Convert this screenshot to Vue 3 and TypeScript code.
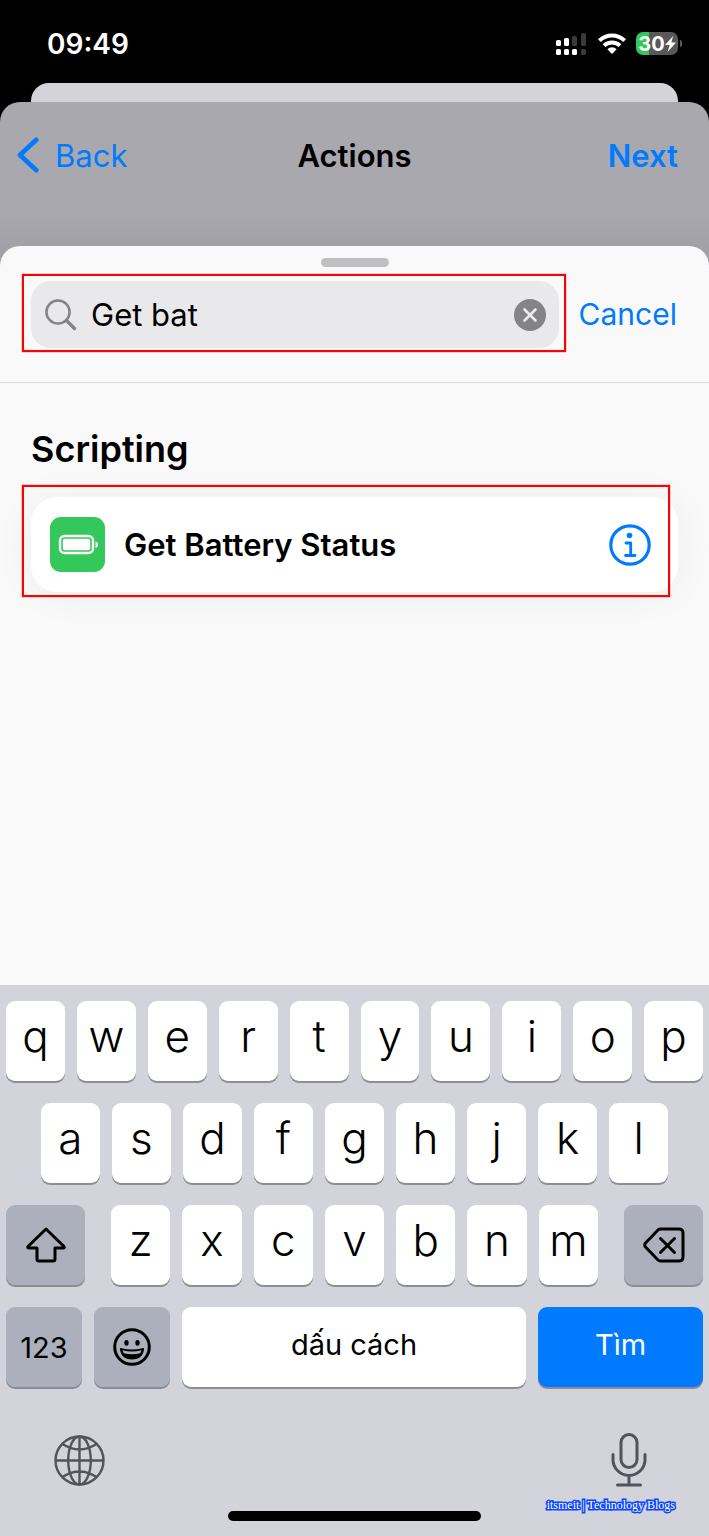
<script setup lang="ts">
import { ref } from 'vue'

const query = ref('Get bat')
const topRow: string[] = [...'qwertyuiop']
const homeRow: string[] = [...'asdfghjkl']
const bottomRow: string[] = [...'zxcvbnm']

function type(letter: string) {
  query.value += letter
}

function erase() {
  query.value = query.value.slice(0, -1)
}
</script>

<template>
  <div class="phone">
    <header class="status">
      <time class="clock">09:49</time>
      <div class="indicators">
        <svg class="signal" viewBox="0 0 30 22" aria-label="Signal">
          <g fill="#fff">
            <rect x="0" y="7" width="5" height="6" rx="1.5" />
            <rect x="8" y="5" width="5" height="8" rx="1.5" />
            <rect x="0" y="16" width="5" height="6" rx="1.5" />
            <rect x="8" y="16" width="5" height="6" rx="1.5" />
            <rect x="16" y="16" width="5" height="6" rx="1.5" />
          </g>
          <g fill="#3a3a3a">
            <rect x="16" y="3" width="5" height="10" rx="1.5" />
            <rect x="25" y="0" width="5" height="13" rx="1.5" />
            <rect x="25" y="16" width="5" height="6" rx="1.5" />
          </g>
        </svg>
        <svg class="wifi" viewBox="0 0 28 21" aria-label="Wi-Fi">
          <g fill="none" stroke="#fff" stroke-width="4">
            <path d="M1.4 7.6a18 18 0 0 1 25.2 0" />
            <path d="M6 12.6a11.6 11.6 0 0 1 16 0" />
          </g>
          <path d="M9.4 16.2a6.6 6.6 0 0 1 9.2 0L14 21z" fill="#fff" />
        </svg>
        <div class="battery">
          <span class="battery-body">
            <span>30</span>
            <svg class="bolt" viewBox="0 0 11 16" aria-hidden="true">
              <path d="M8.2 0 0 9h4.6L2.6 16 11 6.6H6.3z" fill="#fff" />
            </svg>
          </span>
          <span class="battery-cap"></span>
        </div>
      </div>
    </header>

    <div class="back-sheet"></div>

    <div class="sheet">
      <nav class="nav">
        <button type="button" class="link back">
          <svg class="chevron" viewBox="0 0 22 36" aria-hidden="true">
            <path d="M19.3 2.7 3 18l16.300 15.300" fill="none" stroke="currentColor" stroke-width="4.600" stroke-linecap="round" stroke-linejoin="round" />
          </svg>
          <span>Back</span>
        </button>
        <h1 class="title">Actions</h1>
        <button type="button" class="link next">Next</button>
      </nav>

      <main class="panel">
        <div class="grabber"></div>
        <form class="search" role="search" @submit.prevent>
          <div class="field">
            <label class="field-label" for="query" aria-label="Search actions">
              <svg class="magnifier" viewBox="0 0 32 32" aria-hidden="true">
                <g fill="none" stroke="#838388" stroke-linecap="round">
                  <circle cx="13" cy="13" r="11.600" stroke-width="2.500" />
                  <path d="m21.500 21.500 8 8" stroke-width="3.400" />
                </g>
              </svg>
            </label>
            <input id="query" v-model="query" type="text" autocomplete="off" />
            <button type="button" class="clear" aria-label="Clear" @click="query = ''">
              <svg viewBox="0 0 32 32" aria-hidden="true">
                <circle cx="16" cy="16" r="16" fill="#838388" />
                <path d="m10.500 10.500 11 11m0-11-11 11" stroke="#ececee" stroke-width="2.600" stroke-linecap="round" />
              </svg>
            </button>
            <span class="highlight field-highlight"></span>
          </div>
          <button type="button" class="link cancel">Cancel</button>
        </form>

        <section class="results">
          <h2>Scripting</h2>
          <div class="card">
            <svg class="app-icon" viewBox="0 0 55 55" aria-hidden="true">
              <rect width="55" height="55" rx="11" fill="#34c759" />
              <rect x="10" y="19" width="33" height="17" rx="4.500" fill="none" stroke="#fff" stroke-width="2.400" />
              <rect x="12.800" y="21.800" width="27.400" height="11.400" rx="2" fill="#fff" />
              <path d="M45.500 24.200a4 3.600 0 0 1 0 6.800z" fill="#fff" />
            </svg>
            <span class="card-title">Get Battery Status</span>
            <button type="button" class="info" aria-label="Info">
              <svg viewBox="0 0 42 42" aria-hidden="true">
                <circle cx="21" cy="21" r="19.200" fill="none" stroke="#007aff" stroke-width="3.200" />
                <circle cx="20.500" cy="11.500" r="2.800" fill="#007aff" />
                <path d="M17 19h4.700v12.200M16.500 31.500h9.500" fill="none" stroke="#007aff" stroke-width="2.800" stroke-linecap="round" stroke-linejoin="round" />
              </svg>
            </button>
            <span class="highlight card-highlight"></span>
          </div>
        </section>
      </main>
    </div>

    <div class="keyboard">
      <div class="row">
        <button v-for="k in topRow" :key="k" type="button" class="key" @click="type(k)">{{ k }}</button>
      </div>
      <div class="row home">
        <button v-for="k in homeRow" :key="k" type="button" class="key" @click="type(k)">{{ k }}</button>
      </div>
      <div class="row lower">
        <button type="button" class="key dark wide" aria-label="Shift">
          <svg class="shift-icon" viewBox="0 0 40 36" aria-hidden="true">
            <path d="M20 2 2 19.500q-.8 1.500 1 1.500h8V32q0 2 2 2h14q2 0 2-2V21h8q1.800 0 1-1.500z" fill="none" stroke="#000" stroke-width="3" stroke-linejoin="round" />
          </svg>
        </button>
        <div class="row letters">
          <button v-for="k in bottomRow" :key="k" type="button" class="key" @click="type(k)">{{ k }}</button>
        </div>
        <button type="button" class="key dark wide" aria-label="Delete" @click="erase">
          <svg class="delete-icon" viewBox="0 0 42 36" aria-hidden="true">
            <g fill="none" stroke="#000" stroke-width="3" stroke-linejoin="round" stroke-linecap="round">
              <path d="M17.500 2H36q4 0 4 4v24q0 4-4 4H17.500q-1.500 0-2.500-1L2.500 20q-1.500-2 0-4L15 3q1-1 2.500-1z" />
              <path d="m17.500 11.500 14 14m0-14-14 14" />
            </g>
          </svg>
        </button>
      </div>
      <div class="row">
        <button type="button" class="key dark fn small">123</button>
        <button type="button" class="key dark fn" aria-label="Emoji">
          <svg class="emoji-icon" viewBox="0 0 38 38" aria-hidden="true">
            <circle cx="19" cy="19" r="17.300" fill="none" stroke="#000" stroke-width="3" />
            <ellipse cx="13.500" cy="14.800" rx="2.200" ry="2.900" />
            <ellipse cx="24.500" cy="14.800" rx="2.200" ry="2.900" />
            <path d="M7.500 20.500q11.500 3.400 23 0-1 10.500-11.500 10.500T7.500 20.500z" stroke="#000" stroke-width="1.200" stroke-linejoin="round" />
            <path d="M9.500 22.300q9.500 2.500 19 0l-1.200 3q-8.300 2-16.600 0z" fill="#abb0bc" />
          </svg>
        </button>
        <button type="button" class="key space small" @click="type(' ')">dấu cách</button>
        <button type="button" class="key find small">Tìm</button>
      </div>

      <div class="dock">
        <button type="button" class="dock-button" aria-label="Next keyboard">
          <svg class="globe" viewBox="0 0 51 51" aria-hidden="true">
            <g fill="none" stroke="#50555c" stroke-width="2.400">
              <circle cx="25.500" cy="25.500" r="24" />
              <ellipse cx="25.500" cy="25.500" rx="11.300" ry="24" />
              <path d="M25.500 1.500v48M1.500 25.500h48M8.500 9q17 11 34 0M8.500 42q17-11 34 0" />
            </g>
          </svg>
        </button>
        <button type="button" class="dock-button" aria-label="Dictation">
          <svg class="mic" viewBox="0 0 36 54" aria-hidden="true">
            <g fill="none" stroke="#50555c" stroke-width="3" stroke-linecap="round">
              <rect x="10" y="1.500" width="16" height="33" rx="8" />
              <path d="M2 21.500v5a16 16 0 0 0 32 0v-5M18 42.500v9M6.500 52h23" />
            </g>
          </svg>
        </button>
      </div>
      <div class="home-bar"></div>
      <span class="watermark">itsmeit | Technology Blogs</span>
    </div>
  </div>
</template>

<style>
body {
  margin: 0;
  background: #000;
}
</style>

<style scoped>
.phone {
  display: flex;
  flex-direction: column;
  min-height: 100vh;
  background: #000;
  font-family: Inter, "Liberation Sans", sans-serif;
  color: #000;
}

button {
  margin: 0;
  padding: 0;
  border: 0;
  background: none;
  font: inherit;
  color: inherit;
}

svg {
  display: block;
}

h1,
h2 {
  margin: 0;
}

.status {
  display: flex;
  align-items: center;
  justify-content: space-between;
  height: 83px;
  padding: 4px 27px 0 47px;
  box-sizing: border-box;
  color: #fff;
}

.clock {
  font-size: 28px;
  font-weight: 600;
}

.indicators {
  display: flex;
  align-items: center;
  gap: 12px;
}

.signal {
  width: 30px;
  height: 22px;
}

.wifi {
  width: 28px;
  height: 21px;
}

.battery {
  display: flex;
  align-items: center;
  gap: 2px;
  margin-left: -2px;
}

.battery-body {
  display: flex;
  align-items: center;
  justify-content: center;
  width: 42px;
  height: 23px;
  border-radius: 7px;
  background: linear-gradient(90deg, #34c759 30%, #58585a 30%);
  font-size: 20px;
  font-weight: 700;
}

.bolt {
  width: 11px;
  height: 16px;
}

.battery-cap {
  width: 2px;
  height: 7px;
  border-radius: 0 2px 2px 0;
  background: #58585a;
}

.back-sheet {
  height: 19px;
  margin: 0 31px;
  border-radius: 18px 18px 0 0;
  background: #d4d3d9;
}

.sheet {
  display: flex;
  flex: 1;
  flex-direction: column;
  border-radius: 20px 20px 0 0;
  background: linear-gradient(#a9a8ae 110px, #a1a0a6 150px);
}

.nav {
  display: grid;
  grid-template-columns: 1fr auto 1fr;
  align-items: center;
  height: 144px;
  padding: 0 17px 38px;
  box-sizing: border-box;
  font-size: 31px;
}

.link {
  color: #007aff;
  white-space: nowrap;
}

.back {
  display: flex;
  align-items: center;
  gap: 16px;
  justify-self: start;
}

.chevron {
  width: 22px;
  height: 36px;
}

.title {
  font-size: 31px;
  font-weight: 600;
}

.next {
  justify-self: end;
  margin-right: 14px;
  font-weight: 600;
}

.panel {
  flex: 1;
  border-radius: 20px 20px 0 0;
  background: #f9f9f9;
}

.grabber {
  width: 68px;
  height: 9px;
  margin: 0 auto;
  border-radius: 5px;
  background: #c0c0c2;
  transform: translateY(12px);
}

.search {
  display: flex;
  align-items: center;
  gap: 20px;
  padding: 26px 32px 34px 31px;
  border-bottom: 1px solid #d8d8da;
}

.field {
  position: relative;
  display: flex;
  flex: 1;
  align-items: center;
  gap: 14px;
  min-width: 0;
  height: 67px;
  padding: 0 13px 0 14px;
  box-sizing: border-box;
  border-radius: 20px;
  background: #e9e9eb;
}

.magnifier,
.clear svg {
  width: 32px;
  height: 32px;
}

.field input {
  flex: 1;
  min-width: 0;
  padding: 0;
  border: 0;
  outline: 0;
  background: none;
  font: inherit;
  font-size: 31px;
  color: #000;
}

.cancel {
  padding-bottom: 2px;
  font-size: 30px;
}

.highlight {
  position: absolute;
  border: 2px solid #f00;
  box-shadow: 0 0 1px #f00;
  pointer-events: none;
}

.field-highlight {
  inset: -7px -7px -4px -9px;
}

.card-highlight {
  inset: -12px 8px -5px -9px;
}

.results {
  padding: 42px 31px 0;
}

.results h2 {
  font-size: 36px;
  font-weight: 600;
  line-height: 48px;
}

.card {
  position: relative;
  display: flex;
  align-items: center;
  gap: 19px;
  height: 95px;
  margin-top: 24px;
  padding: 0 27px 0 19px;
  box-sizing: border-box;
  border-radius: 26px;
  background: #fff;
  box-shadow: 0 2px 40px rgba(0, 0, 0, 0.05);
}

.app-icon {
  width: 55px;
  height: 55px;
}

.card-title {
  flex: 1;
  font-size: 31px;
  font-weight: 600;
}

.info svg {
  width: 42px;
  height: 42px;
}

.keyboard {
  position: relative;
  display: flex;
  flex-direction: column;
  gap: 22px;
  padding: 16px 6px 15px;
  background: #d2d3db;
}

.row {
  display: flex;
  gap: 12px;
}

.home {
  padding: 0 5%;
}

.lower {
  gap: 26px;
}

.letters {
  flex: 1;
}

.key {
  display: flex;
  flex: 1 1 0;
  align-items: center;
  justify-content: center;
  min-width: 0;
  height: 80px;
  padding-bottom: 10px;
  border-radius: 9px;
  background: #fff;
  box-shadow: 0 2px 0 #8d8e93;
  box-sizing: border-box;
  font-size: 44px;
  font-weight: 350;
}

.key.dark {
  padding-bottom: 0;
  background: #abb0bc;
}

.key.wide {
  flex: 0 0 79px;
}

.key.fn {
  flex: 0 0 76px;
}

.key.small {
  font-size: 29px;
  font-weight: 400;
}

.key.space,
.key.find {
  padding-bottom: 6px;
}

.key.find {
  flex: 0 0 165px;
  background: #007aff;
  color: #fff;
}

.shift-icon {
  width: 40px;
  height: 36px;
}

.delete-icon {
  width: 42px;
  height: 36px;
}

.emoji-icon {
  width: 38px;
  height: 38px;
}

.dock {
  display: flex;
  align-items: center;
  justify-content: space-between;
  padding: 24px 56px 2px 48px;
}

.globe {
  width: 51px;
  height: 51px;
}

.mic {
  width: 36px;
  height: 54px;
}

.home-bar {
  width: 253px;
  height: 10px;
  margin: 0 auto;
  border-radius: 5px;
  background: #000;
}

.watermark {
  position: absolute;
  right: 34px;
  bottom: 23px;
  font-family: "Liberation Serif", serif;
  font-size: 12px;
  line-height: 16px;
  color: #fff;
  -webkit-text-stroke: 3px #0a46ff;
  paint-order: stroke fill;
}
</style>
